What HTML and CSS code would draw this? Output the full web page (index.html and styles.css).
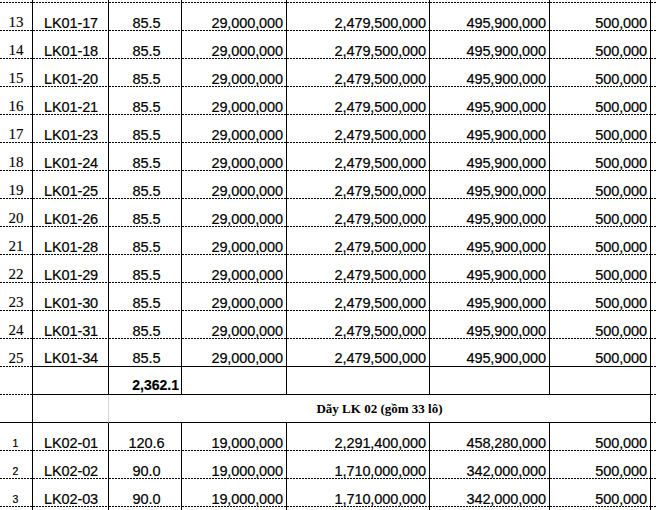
FILE: index.html
```html
<!DOCTYPE html>
<html lang="vi">
<head>
<meta charset="utf-8">
<title>Bảng giá LK</title>
<link rel="stylesheet" href="styles.css">
</head>
<body>
<div class="sheet">
  <div class="row stub">
    <div class="c"></div><div class="c"></div><div class="c"></div><div class="c"></div><div class="c"></div><div class="c"></div><div class="c"></div><div class="c edge"></div>
  </div>

  <div class="row"><div class="c num">13</div><div class="c code">LK01-17</div><div class="c area">85.5</div><div class="c money">29,000,000</div><div class="c money">2,479,500,000</div><div class="c money">495,900,000</div><div class="c money">500,000</div><div class="c edge"></div></div>
  <div class="row"><div class="c num">14</div><div class="c code">LK01-18</div><div class="c area">85.5</div><div class="c money">29,000,000</div><div class="c money">2,479,500,000</div><div class="c money">495,900,000</div><div class="c money">500,000</div><div class="c edge"></div></div>
  <div class="row"><div class="c num">15</div><div class="c code">LK01-20</div><div class="c area">85.5</div><div class="c money">29,000,000</div><div class="c money">2,479,500,000</div><div class="c money">495,900,000</div><div class="c money">500,000</div><div class="c edge"></div></div>
  <div class="row"><div class="c num">16</div><div class="c code">LK01-21</div><div class="c area">85.5</div><div class="c money">29,000,000</div><div class="c money">2,479,500,000</div><div class="c money">495,900,000</div><div class="c money">500,000</div><div class="c edge"></div></div>
  <div class="row"><div class="c num">17</div><div class="c code">LK01-23</div><div class="c area">85.5</div><div class="c money">29,000,000</div><div class="c money">2,479,500,000</div><div class="c money">495,900,000</div><div class="c money">500,000</div><div class="c edge"></div></div>
  <div class="row"><div class="c num">18</div><div class="c code">LK01-24</div><div class="c area">85.5</div><div class="c money">29,000,000</div><div class="c money">2,479,500,000</div><div class="c money">495,900,000</div><div class="c money">500,000</div><div class="c edge"></div></div>
  <div class="row"><div class="c num">19</div><div class="c code">LK01-25</div><div class="c area">85.5</div><div class="c money">29,000,000</div><div class="c money">2,479,500,000</div><div class="c money">495,900,000</div><div class="c money">500,000</div><div class="c edge"></div></div>
  <div class="row"><div class="c num">20</div><div class="c code">LK01-26</div><div class="c area">85.5</div><div class="c money">29,000,000</div><div class="c money">2,479,500,000</div><div class="c money">495,900,000</div><div class="c money">500,000</div><div class="c edge"></div></div>
  <div class="row"><div class="c num">21</div><div class="c code">LK01-28</div><div class="c area">85.5</div><div class="c money">29,000,000</div><div class="c money">2,479,500,000</div><div class="c money">495,900,000</div><div class="c money">500,000</div><div class="c edge"></div></div>
  <div class="row"><div class="c num">22</div><div class="c code">LK01-29</div><div class="c area">85.5</div><div class="c money">29,000,000</div><div class="c money">2,479,500,000</div><div class="c money">495,900,000</div><div class="c money">500,000</div><div class="c edge"></div></div>
  <div class="row"><div class="c num">23</div><div class="c code">LK01-30</div><div class="c area">85.5</div><div class="c money">29,000,000</div><div class="c money">2,479,500,000</div><div class="c money">495,900,000</div><div class="c money">500,000</div><div class="c edge"></div></div>
  <div class="row"><div class="c num">24</div><div class="c code">LK01-31</div><div class="c area">85.5</div><div class="c money">29,000,000</div><div class="c money">2,479,500,000</div><div class="c money">495,900,000</div><div class="c money">500,000</div><div class="c edge"></div></div>
  <div class="row"><div class="c num">25</div><div class="c code solid">LK01-34</div><div class="c area solid">85.5</div><div class="c money solid">29,000,000</div><div class="c money solid">2,479,500,000</div><div class="c money solid">495,900,000</div><div class="c money solid">500,000</div><div class="c edge"></div></div>

  <div class="row"><div class="c num"></div><div class="c solid"></div><div class="c total solid">2,362.1</div><div class="c solid"></div><div class="c solid"></div><div class="c solid"></div><div class="c solid"></div><div class="c edge"></div></div>

  <div class="row"><div class="c solid"></div><div class="c solid gray"></div><div class="c group solid">Dãy LK 02 (gồm 33 lô)</div><div class="c edge"></div></div>

  <div class="row"><div class="c idx">1</div><div class="c code">LK02-01</div><div class="c area">120.6</div><div class="c money">19,000,000</div><div class="c money">2,291,400,000</div><div class="c money">458,280,000</div><div class="c money">500,000</div><div class="c edge"></div></div>
  <div class="row"><div class="c idx">2</div><div class="c code">LK02-02</div><div class="c area">90.0</div><div class="c money">19,000,000</div><div class="c money">1,710,000,000</div><div class="c money">342,000,000</div><div class="c money">500,000</div><div class="c edge"></div></div>
  <div class="row"><div class="c idx">3</div><div class="c code">LK02-03</div><div class="c area">90.0</div><div class="c money">19,000,000</div><div class="c money">1,710,000,000</div><div class="c money">342,000,000</div><div class="c money">500,000</div><div class="c edge"></div></div>

  <div class="row tail">
    <div class="c"></div><div class="c"></div><div class="c"></div><div class="c"></div><div class="c"></div><div class="c"></div><div class="c"></div><div class="c edge"></div>
  </div>
</div>
</body>
</html>
```

FILE: styles.css
```css
html, body {
  margin: 0;
  padding: 0;
  background: #fff;
}

body {
  width: 656px;
  height: 510px;
  overflow: hidden;
  font-family: "Liberation Sans", Arial, sans-serif;
  font-size: 14.5px;
  letter-spacing: -0.1px;
  color: #000;
  -webkit-text-stroke: 0.2px #000;
}

.sheet {
  display: flex;
  flex-direction: column;
  width: 680px;
}

.row {
  display: grid;
  grid-template-columns: 33px 76px 73px 105px 143px 120px 101px 29px;
  height: 28px;
}

.row.stub {
  height: 3px;
}

.row.tail {
  height: 12px;
}

.c {
  box-sizing: border-box;
  display: flex;
  align-items: flex-end;
  justify-content: center;
  border-right: 1px solid #000;
  background-image: linear-gradient(to right, #000 2px, transparent 2px);
  background-size: 3px 1px;
  background-repeat: repeat-x;
  background-position: left bottom;
  white-space: nowrap;
  overflow: hidden;
}

.row.tail .c {
  background: none;
}

.c.edge {
  border-right: none;
}

.c.solid {
  background: none;
  border-bottom: 1px solid #000;
}

.c.gray {
  border-right-color: #d6d6d6;
}

.num {
  font-family: "Liberation Serif", "Times New Roman", serif;
  font-size: 15px;
  letter-spacing: 0;
  -webkit-text-stroke: 0.1px #000;
  padding-bottom: 0.5px;
}

.idx {
  font-size: 10.5px;
  letter-spacing: 0;
  padding-bottom: 2.5px;
  padding-right: 1px;
}

.code {
  padding-left: 1px;
}

.area {
  padding-left: 3px;
}

.money {
  justify-content: flex-end;
  padding-right: 3px;
}

.total {
  justify-content: flex-end;
  font-weight: bold;
  font-size: 14px;
  letter-spacing: 0;
  padding-right: 2px;
  padding-bottom: 1px;
}

.group {
  grid-column: span 5;
  font-family: "Liberation Serif", "Times New Roman", serif;
  font-weight: bold;
  font-size: 13px;
  letter-spacing: 0;
  -webkit-text-stroke: 0;
  padding-bottom: 5px;
}
```
